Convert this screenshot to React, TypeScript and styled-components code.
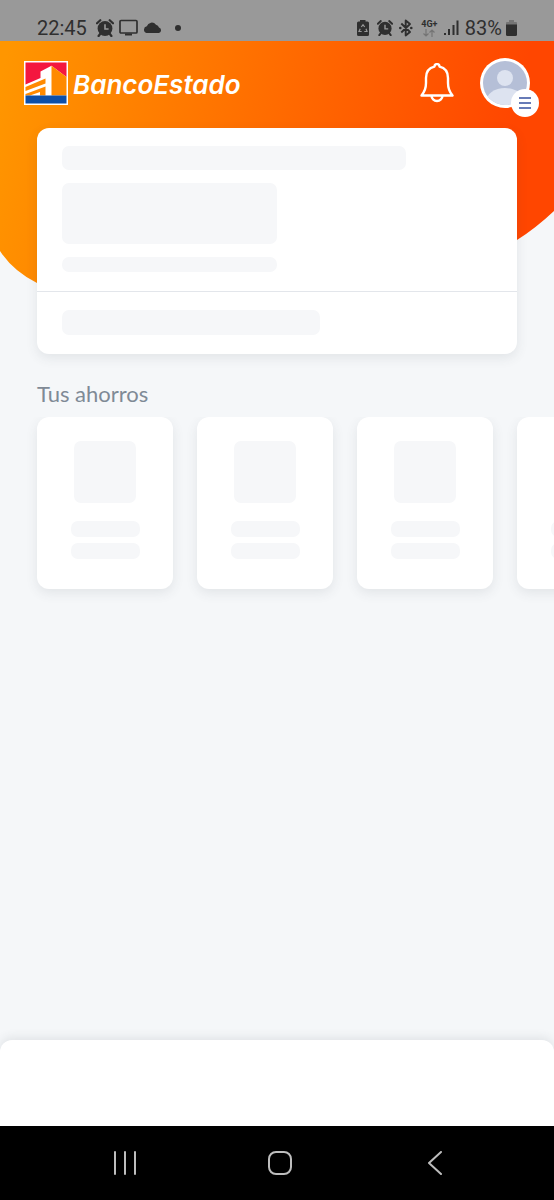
import React from "react";
import styled, { createGlobalStyle } from "styled-components";

const ink = "#2f2f2f";

const GlobalStyle = createGlobalStyle`
  *, *::before, *::after { box-sizing: border-box; }
  body { margin: 0; background: #f5f7f9; font-family: Lato, sans-serif; }
  svg { display: block; flex: none; }
`;

const Screen = styled.div`
  display: flex;
  flex-direction: column;
  min-height: 100vh;
  overflow: hidden;
  background: #f5f7f9;
`;

const StatusBar = styled.div`
  display: flex;
  justify-content: space-between;
  align-items: center;
  height: 41px;
  padding: 14px 37px 0;
  background: #999999;
  color: ${ink};
  font: 400 20px/26px Roboto, sans-serif;
`;

const StatusGroup = styled.div<{ $gap: number }>`
  display: flex;
  align-items: center;
  gap: ${(p) => p.$gap}px;
`;

const Clock = styled.time`
  margin-right: 4px;
`;

const Network = styled.div`
  display: flex;
  flex-direction: column;
  align-items: center;
  width: 17px;
  font: 700 9px/10px Roboto, sans-serif;
`;

const Main = styled.main`
  position: relative;
  z-index: 0;
  flex: 1;
`;

const Wave = styled.svg`
  position: absolute;
  z-index: -1;
  top: 0;
  left: 0;
  width: 100%;
  height: 260px;
`;

const Header = styled.header`
  display: flex;
  align-items: center;
  justify-content: space-between;
  height: 87px;
  padding: 0 24px 4px;
`;

const Brand = styled.a`
  display: flex;
  align-items: flex-end;
  gap: 5px;
  color: #ffffff;
  font: italic 600 26px/40px Inter, sans-serif;
  text-decoration: none;
`;

const Actions = styled.div`
  display: flex;
  align-items: center;
  gap: 26px;
`;

const IconButton = styled.button`
  position: relative;
  padding: 0;
  border: 0;
  background: none;
  cursor: pointer;
`;

const MenuBadge = styled.span`
  position: absolute;
  right: -9px;
  bottom: -9px;
  display: flex;
  align-items: center;
  justify-content: center;
  width: 28px;
  height: 28px;
  border-radius: 50%;
  background: #ffffff;
`;

const AccountCard = styled.section`
  margin: 0 37px;
  border-radius: 12px;
  background: #ffffff;
  box-shadow: 0 4px 12px rgba(60, 70, 80, 0.1);
`;

const CardPart = styled.div`
  display: flex;
  flex-direction: column;
  gap: 13px;
  padding: 18px 25px 19px;

  & + & {
    border-top: 1px solid #e3e6eb;
  }
`;

const Skeleton = styled.div<{ $width: string; $height: number }>`
  width: ${(p) => p.$width};
  height: ${(p) => p.$height}px;
  border-radius: 7px;
  background: #f6f7f9;
`;

const SectionTitle = styled.h2`
  margin: 25px 37px 8px;
  color: #7f8a96;
  font: 400 22px/30px Lato, sans-serif;
`;

const SavingsList = styled.div`
  display: flex;
  gap: 24px;
  padding: 0 37px 24px;
  overflow: hidden;
`;

const SavingsCard = styled.article`
  display: flex;
  flex: none;
  flex-direction: column;
  align-items: center;
  gap: 6px;
  width: 136px;
  height: 172px;
  padding-top: 24px;
  border-radius: 12px;
  background: #ffffff;
  box-shadow: 0 4px 12px rgba(60, 70, 80, 0.1);
`;

const SavingsPicture = styled(Skeleton)`
  margin-bottom: 12px;
`;

const BottomSheet = styled.div`
  height: 86px;
  border-radius: 12px 12px 0 0;
  background: #ffffff;
  box-shadow: 0 -3px 10px rgba(60, 70, 80, 0.1);
`;

const SystemNav = styled.nav`
  display: flex;
  align-items: center;
  justify-content: space-around;
  height: 74px;
  padding: 0 42px 0 47px;
  background: #000000;
`;

const AlarmIcon = ({ size }: { size: number }) => (
  <svg width={size} height={size} viewBox="0 0 18 18" aria-hidden="true">
    <circle cx="9" cy="9.500" r="7.400" fill={ink} />
    <path d="M1 4.300 4.300 1.200M17 4.300 13.700 1.200M4.500 14.500 2.600 17M13.500 14.500 15.400 17" stroke={ink} strokeWidth="2.200" strokeLinecap="round" />
    <path d="M9 5.300V10H12.600" fill="none" stroke="#999999" strokeWidth="1.600" />
  </svg>
);

const BankLogo = () => (
  <svg width="44" height="44" viewBox="0 0 44 44" aria-hidden="true">
    <rect width="44" height="44" fill="#ffffff" />
    <path d="M1.500 1.500H42.500V16L27.500 4.800 16.500 10.500V17L1.500 23.500Z" fill="#f4173f" />
    <path d="M27.500 4.800 42.500 16V34.500H27.500Z" fill="#ff8a00" />
    <path d="M1.500 26 21.500 17.500V22.500L1.500 30ZM1.500 33 21.500 25.500V34.500H16V31L6 34.500H1.500Z" fill="#ff8a00" />
    <path d="M1.500 34.500H42.500V42.500H1.500Z" fill="#0d4fa8" />
  </svg>
);

export default function App() {
  return (
    <Screen>
      <GlobalStyle />
      <StatusBar>
        <StatusGroup $gap={5}>
          <Clock>22:45</Clock>
          <AlarmIcon size={18} />
          <svg width="19" height="18" viewBox="0 0 19 18" aria-hidden="true">
            <rect x="1" y="1.500" width="17" height="12.500" rx="1" fill="none" stroke={ink} strokeWidth="1.700" />
            <path d="M6 15.500H13" stroke={ink} strokeWidth="2" />
          </svg>
          <svg width="19" height="18" viewBox="0 0 19 18" aria-hidden="true">
            <path d="M3.500 14A3.500 3.500 0 0 1 3.800 7.200 A5.200 5.200 0 0 1 13 5.800 A4 4 0 0 1 16 8.600 A2.800 2.800 0 0 1 16 14Z" fill={ink} />
          </svg>
          <svg width="22" height="18" viewBox="0 0 22 18" aria-hidden="true">
            <circle cx="11" cy="9" r="3" fill={ink} />
          </svg>
        </StatusGroup>
        <StatusGroup $gap={6}>
          <svg width="14" height="18" viewBox="0 0 14 18" aria-hidden="true">
            <path d="M3 1H8.500V2.500H10.500a1.500 1.500 0 0 1 1.500 1.500V15.500a1.500 1.500 0 0 1-1.500 1.500H1.500a1.500 1.500 0 0 1-1.500-1.500V4a1.500 1.500 0 0 1 1.500-1.500H3Z" fill={ink} />
            <path d="M4.300 8 6 5.700 7.700 8M9 9.700 10 12.500H7.300M4.700 12.500H2L3.200 9.700" fill="none" stroke="#999999" strokeWidth="1.200" />
          </svg>
          <AlarmIcon size={16} />
          <svg width="16" height="18" viewBox="0 0 16 18" aria-hidden="true">
            <path d="M2.300 4.500 11 13 6.700 16.500V1.500L11 5 2.300 13.500" fill="none" stroke={ink} strokeWidth="1.900" strokeLinejoin="round" />
            <circle cx="1.300" cy="9" r="1.300" fill={ink} />
            <circle cx="12.300" cy="9" r="1.300" fill={ink} />
          </svg>
          <Network>
            4G+
            <svg width="12" height="8" viewBox="0 0 12 8" aria-hidden="true">
              <path d="M3 0V7M.5 4.500 3 7 5.500 4.500M9 8V1M6.500 3.500 9 1 11.500 3.500" fill="none" stroke="#757575" strokeWidth="1.200" />
            </svg>
          </Network>
          <svg width="15" height="18" viewBox="0 0 15 18" aria-hidden="true">
            <path d="M1 14V16M5 10V16M9.500 6V16M13.500 1.500V16" stroke={ink} strokeWidth="2" />
          </svg>
          <StatusGroup $gap={4}>
            <span>83%</span>
            <svg width="11" height="18" viewBox="0 0 11 18" aria-hidden="true">
              <path d="M3 1H8V3H10a1 1 0 0 1 1 1V6H0V4a1 1 0 0 1 1-1H3Z" fill="#757575" />
              <path d="M0 5.500H11V15.500a1.500 1.500 0 0 1-1.500 1.500H1.500a1.500 1.500 0 0 1-1.500-1.500Z" fill={ink} />
            </svg>
          </StatusGroup>
        </StatusGroup>
      </StatusBar>

      <Main>
        <Wave viewBox="0 0 554 260" preserveAspectRatio="none" aria-hidden="true">
          <defs>
            <linearGradient id="sunset" gradientUnits="userSpaceOnUse" x1="0" y1="40" x2="500" y2="150">
              <stop offset="0" stopColor="#ff9600" />
              <stop offset="1" stopColor="#ff4600" />
            </linearGradient>
          </defs>
          <path d="M0 0H554V170Q536 187 517 199C420 270 120 290 37 242Q13 230 0 210Z" fill="url(#sunset)" />
        </Wave>

        <Header>
          <Brand href="#">
            <BankLogo />
            BancoEstado
          </Brand>
          <Actions>
            <IconButton aria-label="Notificaciones">
              <svg width="34" height="40" viewBox="0 0 34 40" fill="none" stroke="#ffffff" strokeWidth="2.400" strokeLinejoin="round" aria-hidden="true">
                <path d="M14.500 3.600a2.500 2.500 0 0 1 5 0C25 4.800 28 9 28 15V20C28 25 29.500 29 32.500 32.500H1.500C4.500 29 6 25 6 20V15C6 9 9 4.800 14.500 3.600Z" />
                <path d="M11.500 32.500a5.500 5.500 0 0 0 11 0" />
              </svg>
            </IconButton>
            <IconButton aria-label="Menú de usuario">
              <svg width="50" height="50" viewBox="0 0 50 50" aria-hidden="true">
                <defs>
                  <clipPath id="face"><circle cx="25" cy="25" r="22" /></clipPath>
                </defs>
                <circle cx="25" cy="25" r="25" fill="#ffffff" />
                <circle cx="25" cy="25" r="22" fill="#b5bfd7" />
                <g fill="#dde3f0" clipPath="url(#face)">
                  <circle cx="25" cy="20" r="8" />
                  <ellipse cx="25" cy="44" rx="19" ry="14" />
                </g>
              </svg>
              <MenuBadge>
                <svg width="12" height="12" viewBox="0 0 12 12" aria-hidden="true">
                  <path d="M0 1H12M0 6H12M0 11H12" stroke="#3650a0" strokeWidth="1.500" />
                </svg>
              </MenuBadge>
            </IconButton>
          </Actions>
        </Header>

        <AccountCard aria-busy="true">
          <CardPart>
            <Skeleton $width="80%" $height={24} />
            <Skeleton $width="50%" $height={61} />
            <Skeleton $width="50%" $height={15} />
          </CardPart>
          <CardPart>
            <Skeleton $width="60%" $height={25} />
          </CardPart>
        </AccountCard>

        <SectionTitle>Tus ahorros</SectionTitle>
        <SavingsList aria-busy="true">
          {[0, 1, 2, 3].map((n) => (
            <SavingsCard key={n}>
              <SavingsPicture $width="62px" $height={62} />
              <Skeleton $width="69px" $height={16} />
              <Skeleton $width="69px" $height={16} />
            </SavingsCard>
          ))}
        </SavingsList>
      </Main>

      <BottomSheet />
      <SystemNav>
        <IconButton aria-label="Recientes">
          <svg width="24" height="24" viewBox="0 0 24 24" aria-hidden="true">
            <path d="M2 1V23M12 1V23M22 1V23" stroke="#bdbdbd" strokeWidth="2" strokeLinecap="round" />
          </svg>
        </IconButton>
        <IconButton aria-label="Inicio">
          <svg width="24" height="24" viewBox="0 0 24 24" aria-hidden="true">
            <rect x="1" y="1" width="22" height="22" rx="7" fill="none" stroke="#bdbdbd" strokeWidth="2" />
          </svg>
        </IconButton>
        <IconButton aria-label="Atrás">
          <svg width="24" height="24" viewBox="0 0 24 24" aria-hidden="true">
            <path d="M18 1 6 12 18 23" fill="none" stroke="#bdbdbd" strokeWidth="2" strokeLinecap="round" strokeLinejoin="round" />
          </svg>
        </IconButton>
      </SystemNav>
    </Screen>
  );
}
